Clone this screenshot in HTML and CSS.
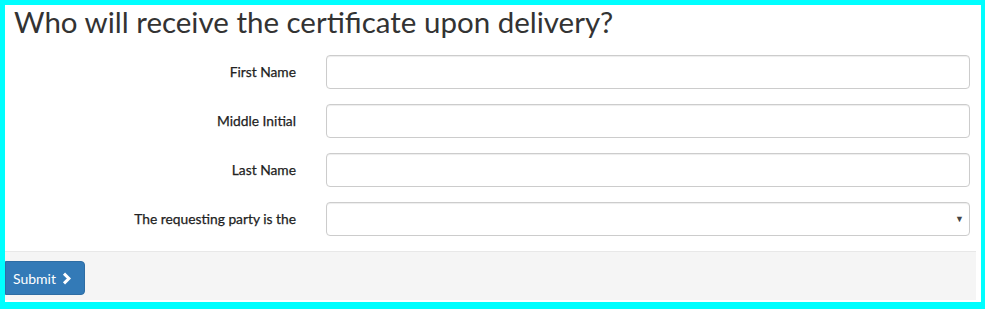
FILE: index.html
```html
<!DOCTYPE html>
<html lang="en">
<head>
  <meta charset="UTF-8" />
  <title>Certificate delivery</title>
  <link rel="stylesheet" href="styles.css">
</head>
<body>

  <div class="cert-panel">
    <h2 class="cert-title">Who will receive the certificate upon delivery?</h2>

    <form class="cert-form">
      <div class="cert-row">
        <label class="cert-label" for="firstName">First Name</label>
        <input class="cert-input" id="firstName" type="text" />
      </div>
      <div class="cert-row">
        <label class="cert-label" for="middleInitial">Middle Initial</label>
        <input class="cert-input" id="middleInitial" type="text" />
      </div>
      <div class="cert-row">
        <label class="cert-label" for="lastName">Last Name</label>
        <input class="cert-input" id="lastName" type="text" />
      </div>
      <div class="cert-row">
        <label class="cert-label" for="party">The requesting party is the</label>
        <div class="cert-select-wrap">
          <select class="cert-input cert-select" id="party">
            <option></option>
          </select>
          <span class="cert-caret">&#9660;</span>
        </div>
      </div>
    </form>

    <div class="cert-footer">
      <button class="cert-submit" type="button">
        Submit
        <svg class="cert-chevron" width="10" height="13" viewBox="0 0 10 13">
          <path d="M2 1.6 L6.9 6.5 L2 11.4" fill="none" stroke="#fff" stroke-width="3" stroke-linecap="butt" stroke-linejoin="miter"/>
        </svg>
      </button>
    </div>
  </div>

</body>
</html>
```

FILE: styles.css
```css
* {
  box-sizing: border-box;
}

body {
  margin: 0;
  background: #00ffff;
  font-family: Lato, "Open Sans", sans-serif;
  color: #333;
  padding: 5px 4px 7px 5px;
}

.cert-panel {
  background: #fff;
  height: 297px;
  padding-bottom: 3px;
}

.cert-title {
  margin: 0 0 17px 0;
  padding-left: 9px;
  font-size: 29.5px;
  line-height: 33px;
  font-weight: 400;
  color: #333;
}

.cert-form {
  padding-right: 11px;
}

.cert-row {
  display: grid;
  grid-template-columns: 291px 1fr;
  column-gap: 30px;
  align-items: center;
  margin-bottom: 15px;
}

.cert-label {
  text-align: right;
  font-size: 13.8px;
  font-weight: 400;
  color: #222;
  -webkit-text-stroke: 0.25px #222;
  padding-bottom: 1px;
}

.cert-input {
  display: block;
  width: 100%;
  height: 34px;
  padding: 6px 12px;
  border: 1px solid #ccc;
  border-radius: 4px;
  background: #fff;
  font-family: inherit;
  font-size: 14px;
  box-shadow: inset 0 1px 1px rgba(0,0,0,0.075);
}

.cert-select-wrap {
  position: relative;
}

.cert-select {
  appearance: none;
  -webkit-appearance: none;
}

.cert-caret {
  position: absolute;
  right: 6px;
  top: 11px;
  font-size: 9px;
  color: #444;
  pointer-events: none;
}

.cert-footer {
  margin-right: 5px;
  height: 49px;
  padding-top: 9px;
  background: #f5f5f5;
  border-top: 1px solid #e8e8e8;
}

.cert-submit {
  display: flex;
  align-items: center;
  gap: 6px;
  height: 34px;
  padding: 0 12px 0 7px;
  background: #337ab7;
  border: 1px solid #2e6da4;
  border-radius: 0 4px 4px 0;
  color: #fff;
  font-family: inherit;
  font-size: 14px;
  cursor: pointer;
}
```
